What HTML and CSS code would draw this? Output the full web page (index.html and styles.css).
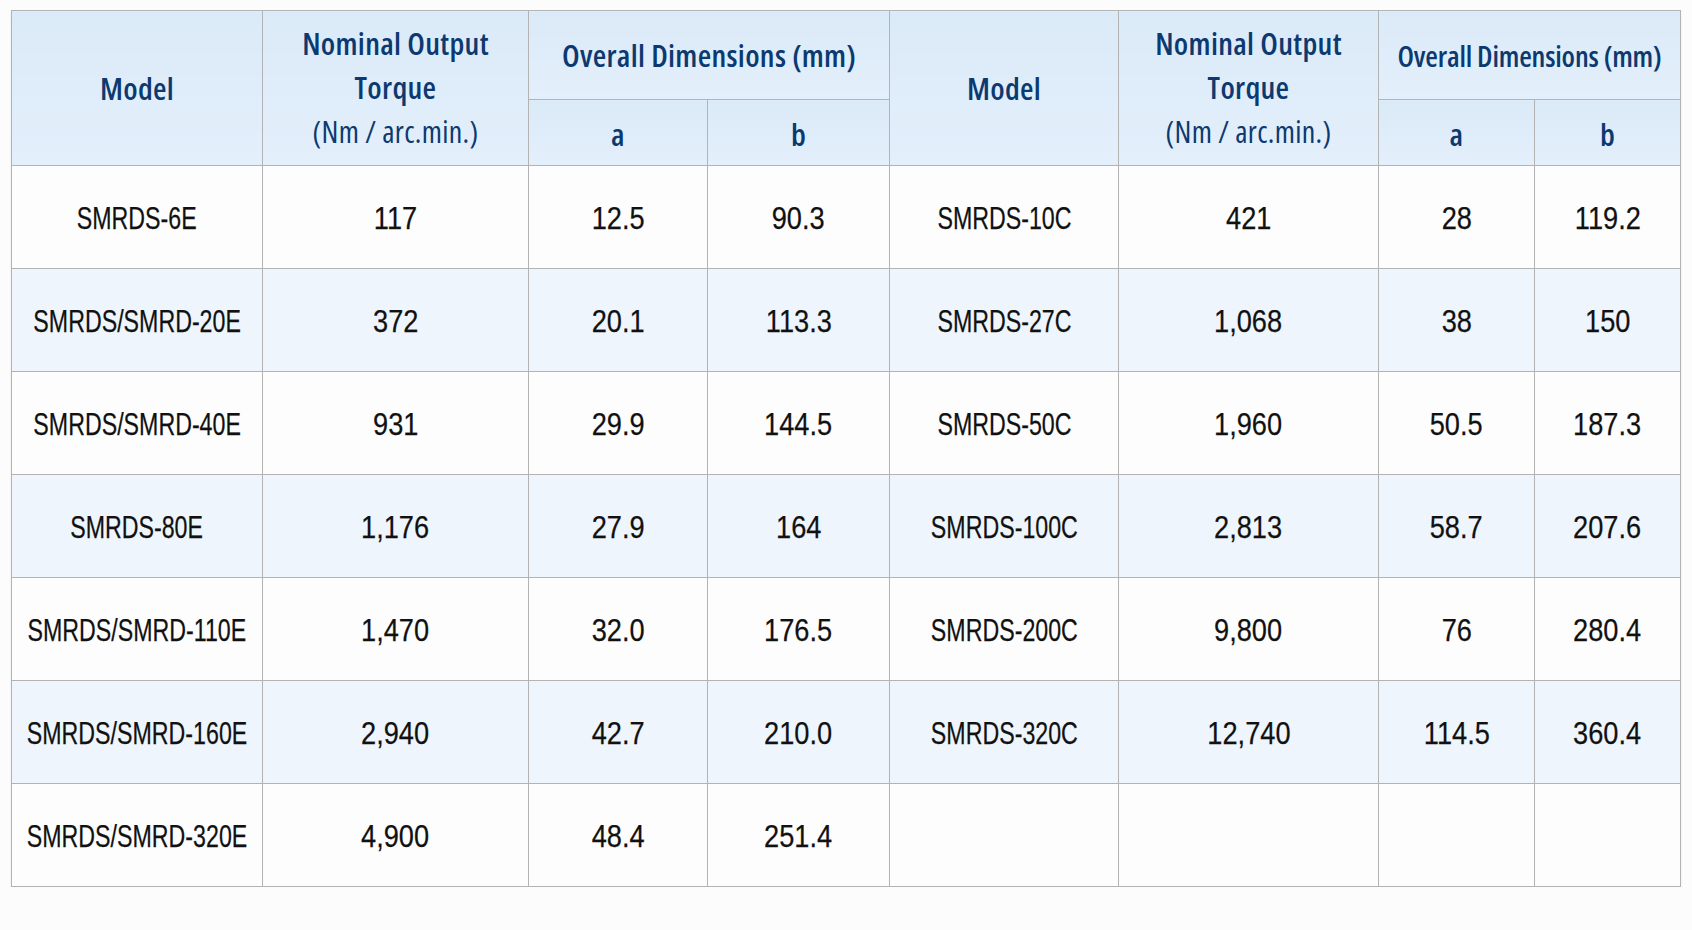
FILE: index.html
```html
<!DOCTYPE html>
<html lang="en">
<head>
<meta charset="utf-8">
<title>SMRDS Dimensions</title>
<link rel="stylesheet" href="styles.css">
</head>
<body>
<table class="spec">
  <colgroup>
    <col class="c-model"><col class="c-torque"><col class="c-a"><col class="c-b">
    <col class="c-model2"><col class="c-torque2"><col class="c-a2"><col class="c-b2">
  </colgroup>
  <thead>
    <tr class="h-top">
      <th rowspan="2" class="h-model">Model</th>
      <th rowspan="2" class="h-torque"><span class="t-main">Nominal Output<br>Torque</span><span class="t-unit">(Nm / arc.min.)</span></th>
      <th colspan="2" class="h-dim">Overall Dimensions (mm)</th>
      <th rowspan="2" class="h-model">Model</th>
      <th rowspan="2" class="h-torque"><span class="t-main">Nominal Output<br>Torque</span><span class="t-unit">(Nm / arc.min.)</span></th>
      <th colspan="2" class="h-dim h-dim-narrow">Overall Dimensions (mm)</th>
    </tr>
    <tr class="h-sub">
      <th>a</th><th>b</th>
      <th>a</th><th>b</th>
    </tr>
  </thead>
  <tbody>
    <tr><td><span class="v">SMRDS-6E</span></td><td><span class="v">117</span></td><td><span class="v">12.5</span></td><td><span class="v">90.3</span></td><td><span class="v">SMRDS-10C</span></td><td><span class="v">421</span></td><td><span class="v">28</span></td><td><span class="v">119.2</span></td></tr>
    <tr class="alt"><td><span class="v">SMRDS/SMRD-20E</span></td><td><span class="v">372</span></td><td><span class="v">20.1</span></td><td><span class="v">113.3</span></td><td><span class="v">SMRDS-27C</span></td><td><span class="v">1,068</span></td><td><span class="v">38</span></td><td><span class="v">150</span></td></tr>
    <tr><td><span class="v">SMRDS/SMRD-40E</span></td><td><span class="v">931</span></td><td><span class="v">29.9</span></td><td><span class="v">144.5</span></td><td><span class="v">SMRDS-50C</span></td><td><span class="v">1,960</span></td><td><span class="v">50.5</span></td><td><span class="v">187.3</span></td></tr>
    <tr class="alt"><td><span class="v">SMRDS-80E</span></td><td><span class="v">1,176</span></td><td><span class="v">27.9</span></td><td><span class="v">164</span></td><td><span class="v">SMRDS-100C</span></td><td><span class="v">2,813</span></td><td><span class="v">58.7</span></td><td><span class="v">207.6</span></td></tr>
    <tr><td><span class="v">SMRDS/SMRD-110E</span></td><td><span class="v">1,470</span></td><td><span class="v">32.0</span></td><td><span class="v">176.5</span></td><td><span class="v">SMRDS-200C</span></td><td><span class="v">9,800</span></td><td><span class="v">76</span></td><td><span class="v">280.4</span></td></tr>
    <tr class="alt"><td><span class="v">SMRDS/SMRD-160E</span></td><td><span class="v">2,940</span></td><td><span class="v">42.7</span></td><td><span class="v">210.0</span></td><td><span class="v">SMRDS-320C</span></td><td><span class="v">12,740</span></td><td><span class="v">114.5</span></td><td><span class="v">360.4</span></td></tr>
    <tr><td><span class="v">SMRDS/SMRD-320E</span></td><td><span class="v">4,900</span></td><td><span class="v">48.4</span></td><td><span class="v">251.4</span></td><td></td><td></td><td></td><td></td></tr>
  </tbody>
</table>
</body>
</html>
```
FILE: styles.css
```css
html, body {
  margin: 0;
  padding: 0;
  background: #fcfcfc;
}

body {
  padding: 10px 0 0 11px;
}

.spec {
  border-collapse: collapse;
  table-layout: fixed;
  width: 1669px;
  border: 1px solid #9c9c9c;
  box-shadow: 0 1px 2px rgba(0, 0, 0, 0.08);
}

.c-model { width: 251px; }
.c-torque { width: 266px; }
.c-a { width: 179px; }
.c-b { width: 182px; }
.c-model2 { width: 229px; }
.c-torque2 { width: 260px; }
.c-a2 { width: 156px; }
.c-b2 { width: 146px; }

.spec th,
.spec td {
  border: 1px solid #b3b3b3;
  text-align: center;
  vertical-align: middle;
  padding: 0;
}

.spec thead th {
  background: linear-gradient(180deg, #dbeaf8 0%, #e3effb 100%);
  color: #0c3a70;
  font-family: "Open Sans", "DejaVu Sans Condensed", sans-serif;
  font-stretch: 75%;
  font-weight: 650;
  font-size: 31px;
  letter-spacing: 0.3px;
}

.h-top { height: 89px; }
.h-sub { height: 66px; }

.h-model {
  padding-top: 8px;
}

.h-dim {
  padding-top: 4px;
}

.spec thead th.h-dim-narrow {
  font-size: 29px;
  letter-spacing: -0.2px;
}

.h-torque {
  line-height: 44px;
  padding-top: 12px;
}

.t-main {
  display: block;
}

.t-unit {
  display: block;
  font-weight: 500;
  font-size: 30px;
  line-height: 46px;
}

.h-sub th {
  padding-top: 2px;
}

.spec tbody tr {
  height: 103px;
}

.spec tbody tr.alt td {
  background: #eef5fc;
}

.spec tbody td {
  background: #fdfdfd;
  color: #111111;
  font-family: "Liberation Sans", Arial, sans-serif;
  font-size: 32px;
  font-weight: 400;
  white-space: nowrap;
  padding-top: 3px;
  -webkit-text-stroke: 0.25px #111111;
}

.v {
  display: inline-block;
  margin: 0 -50px;
  transform: scaleX(0.85);
  transform-origin: 50% 50%;
}

.spec tbody td:nth-child(1) .v,
.spec tbody td:nth-child(5) .v {
  transform: scaleX(0.725);
}
```
